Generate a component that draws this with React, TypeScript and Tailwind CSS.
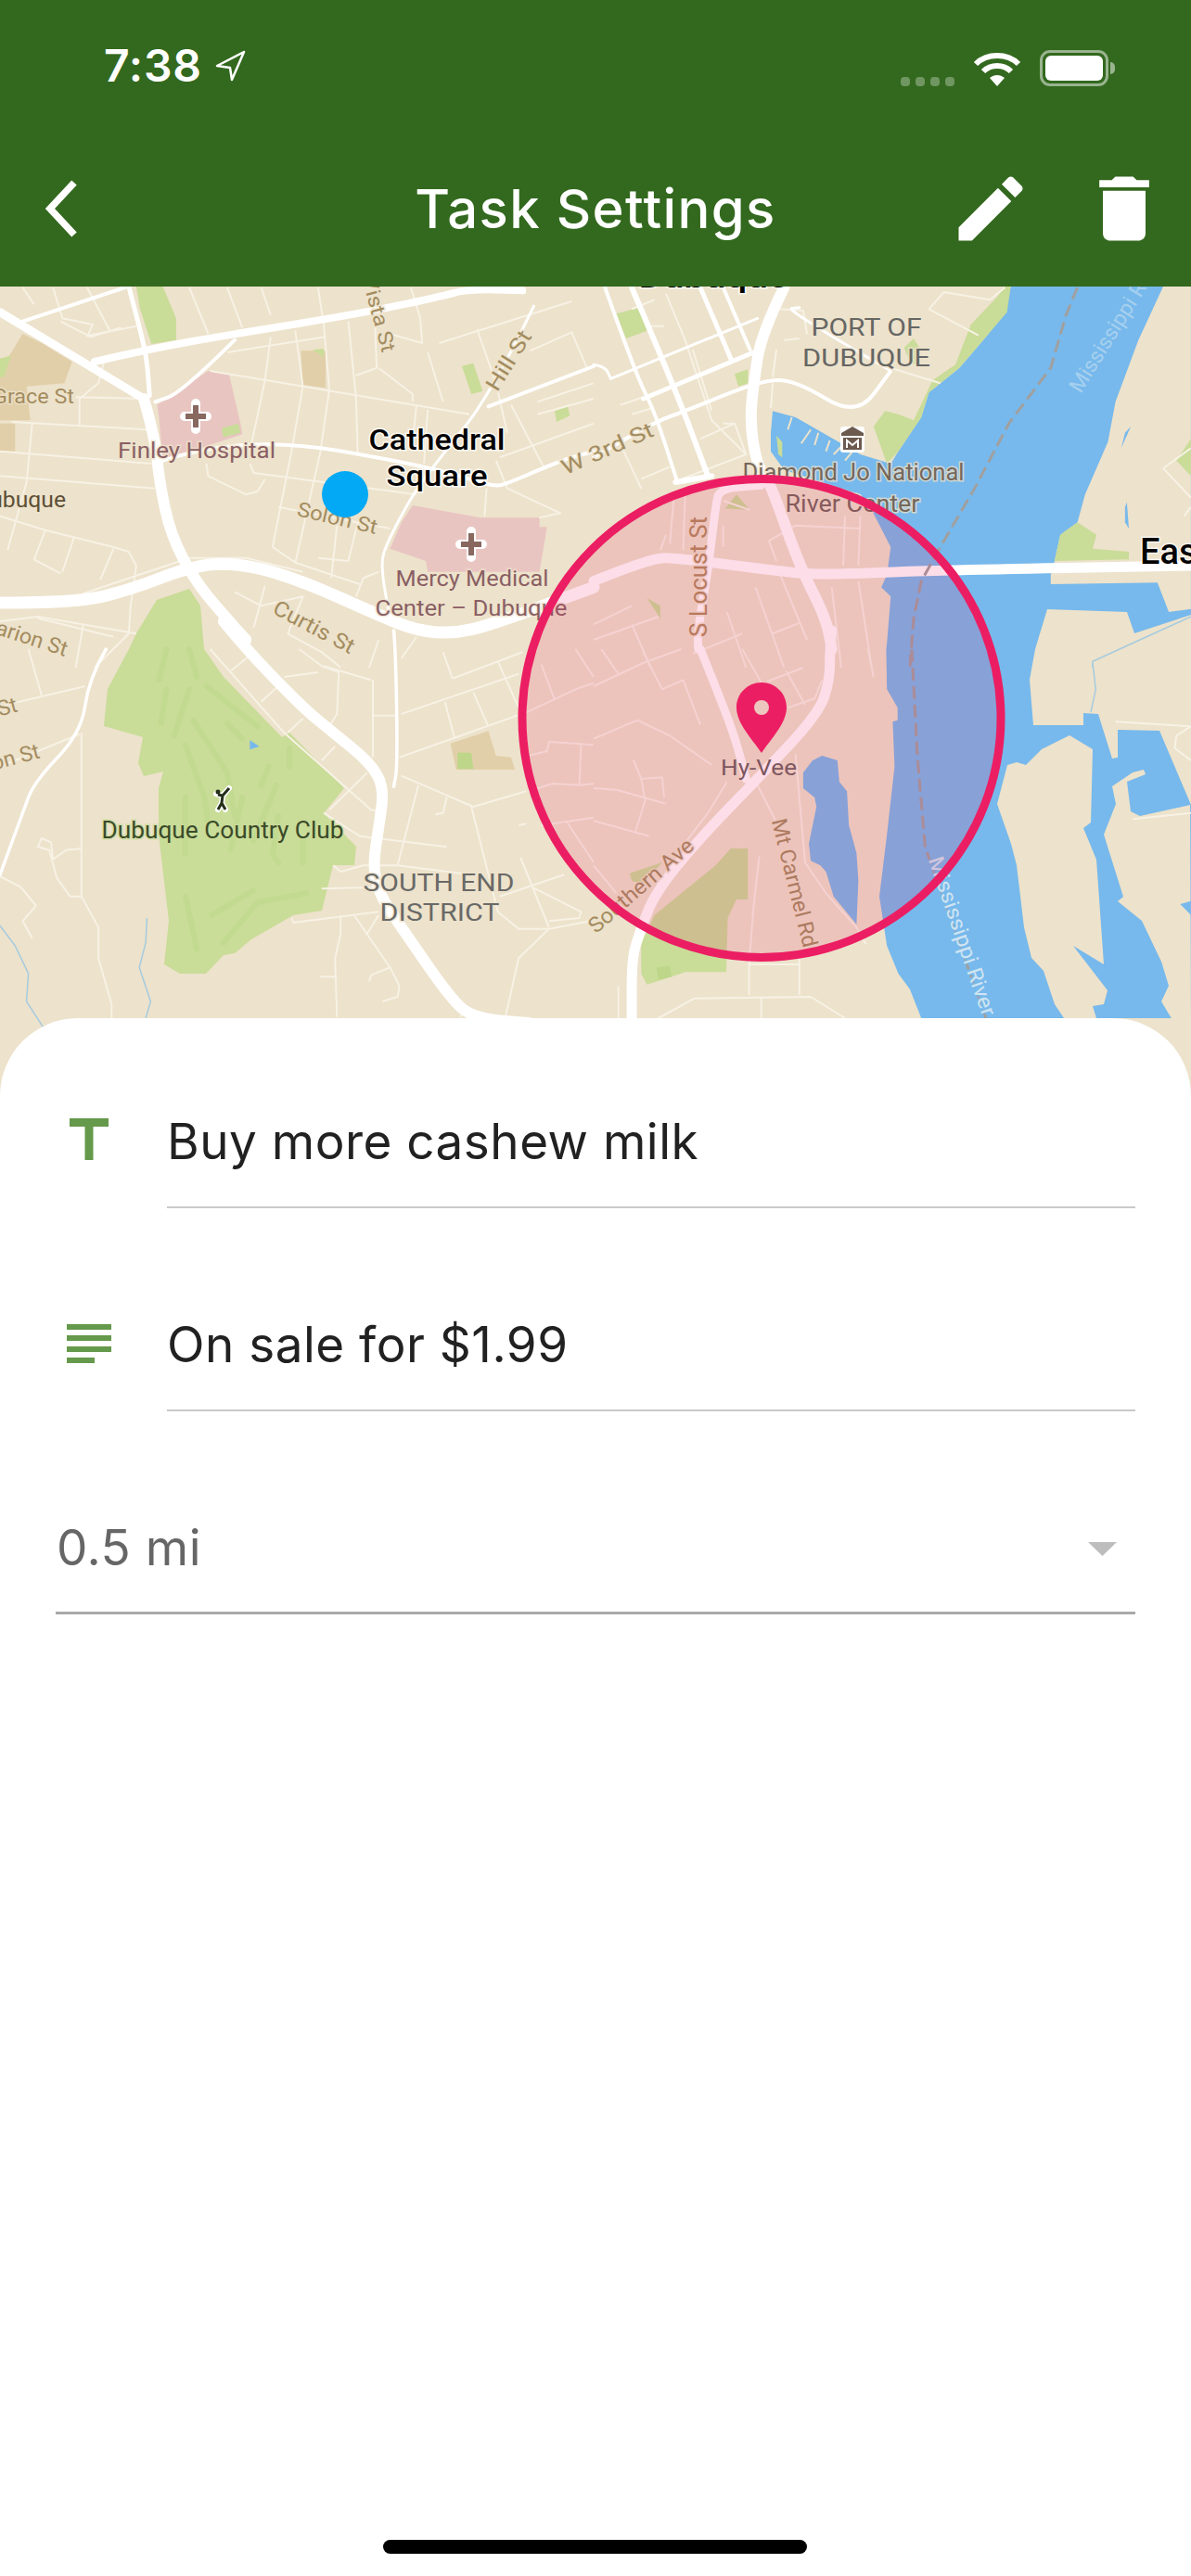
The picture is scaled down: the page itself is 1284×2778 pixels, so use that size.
import React from "react";

type Z = 2 | 3 | 4 | 5;
const toPts = (z: Z, s: string) =>
  s
    .trim()
    .split(/\s+/)
    .map((p) => {
      const [a, b] = p.split(",").map(Number);
      const x = z === 2 || z === 4 ? a / 2.45 : 640 + a / 2.435;
      const y = (z === 2 || z === 3 ? 300 : 700) + b / 3;
      return [x, y];
    });
const conv = (z: Z, s: string) =>
  toPts(z, s)
    .map(([x, y]) => `${x.toFixed(1)},${y.toFixed(1)}`)
    .join(" ");
const smooth = (z: Z, s: string) => {
  const p = toPts(z, s);
  if (p.length < 3) return `M${p[0][0]} ${p[0][1]}L${p[1][0]} ${p[1][1]}`;
  let d = `M${p[0][0].toFixed(1)} ${p[0][1].toFixed(1)}`;
  for (let i = 1; i < p.length - 1; i++) {
    const mx = (p[i][0] + p[i + 1][0]) / 2;
    const my = (p[i][1] + p[i + 1][1]) / 2;
    d += `Q${p[i][0].toFixed(1)} ${p[i][1].toFixed(1)} ${mx.toFixed(1)} ${my.toFixed(1)}`;
  }
  const l = p[p.length - 1];
  return d + `L${l[0].toFixed(1)} ${l[1].toFixed(1)}`;
};

const thin: [Z, string[]][] = [
  [2, [
    "60,30 90,85", "140,30 165,130 245,150 230,190", "230,30 290,170", "500,30 550,180", "600,30 640,160", "690,30 715,120",
    "840,30 855,150", "920,140 940,380 945,570", "990,140 995,290 940,315", "1000,290 1090,375 1090,400", "1030,180 1115,210 1110,130 1085,30",
    "160,140 240,190 320,160", "235,185 360,155", "275,270 260,340 210,390 210,475", "600,240 860,190", "715,190 700,330 660,560",
    "780,170 800,350 770,560 720,870", "855,150 870,360 845,570 780,920", "555,300 1240,440", "1100,410 1090,530", "1130,425 1120,600",
    "200,385 390,390", "30,465 390,490", "0,560 400,600", "0,640 410,680", "85,470 70,660 20,880", "120,815 90,910 160,955", "195,840 165,950",
    "300,875 265,975", "0,770 120,815 300,870 340,885 360,930 345,1060 340,1150 250,1260", "660,600 670,630 1100,700",
    "545,600 550,640 650,700 680,690 700,650", "1285,680 1280,770", "1310,590 1340,680 1480,760 1425,775", "735,740 1030,810",
    "720,870 780,920 950,990", "840,905 920,915 945,790", "890,800 875,970", "1130,240 1170,400", "1260,165 1310,340 1340,500",
    "1160,210 1510,75", "1400,235 1510,175 1550,290", "1350,410 1440,620", "1420,400 1568,340", "1420,440 1568,390", "1320,580 1568,470",
    "620,1015 690,1060 800,1030 760,1150 850,1210 900,1260", "700,995 670,1130", "1000,1170 975,1260", "220,1120 200,1260", "100,1100 300,1160",
    "360,1150 100,1095 0,1110", "940,1030 960,970 1000,950", "1100,1160 1060,1230", "220,1020 500,905 650,905 800,950",
  ]],
  [3, [
    "190,50 240,200 310,460 400,570", "160,70 100,100", "150,155 185,155", "260,230 310,430", "340,470 370,470 400,570 230,650", "280,520 370,470",
    "70,410 130,385", "100,440 155,420", "75,550 125,680", "125,650 200,610", "490,100 550,105 560,180", "480,230 470,320", "500,200 540,195",
    "880,100 920,45 1040,70 1080,30", "880,100 1010,185", "780,290 910,340", "470,340 465,420", "210,720 200,860", "240,700 235,880", "340,720 410,750",
    "340,800 340,870", "460,850 530,800 700,810", "460,850 480,915", "660,770 655,930", "700,770 695,930", "425,1000 500,1260", "490,960 560,1170",
    "695,980 730,1260", "650,1260 625,1000", "0,1120 100,1060", "0,1170 170,1095", "100,1120 150,1260", "350,1080 400,1260", "470,1150 540,1115",
    "260,1215 390,1150", "190,830 175,880", "1495,615 1568,550", "1495,615 1568,710", "1550,770 1568,740",
  ]],
  [4, [
    "75,0 110,150", "0,185 225,120", "0,380 210,275", "215,270 215,800 185,800 150,740 130,650 100,640 110,612 135,625 140,680", "140,680 175,650 215,645",
    "0,735 55,770 95,830 60,880 85,935", "215,800 260,900 260,1000 295,1150 295,1194", "555,0 750,270 980,520 1000,525", "610,70 660,20", "690,170 730,125",
    "760,270 800,225", "850,360 885,315", "870,520 970,400", "790,0 850,55 895,75 890,210 870,250", "750,90 840,75", "855,55 980,100", "985,100 985,350",
    "985,215 1045,215", "1060,210 1370,80", "1055,350 1390,205", "1175,170 1200,285", "1250,140 1290,250", "1195,95 1170,10", "1195,95 1380,10", "1315,40 1370,190",
    "1060,410 1250,510 1390,460", "1105,440 1050,700", "1180,480 1170,530 1150,535", "1245,510 1315,850 1370,905 1450,905 1560,880", "1450,905 1370,1000 1335,1190",
    "1370,570 1390,565", "1375,675 1450,900", "1320,800 1490,730", "1405,770 1535,850 1530,870 1450,880", "855,530 950,605 1180,640",
    "880,700 900,720 960,700 1050,700 1280,735", "850,775 1000,770", "770,870 775,885 1000,850", "900,860 900,920 885,1000 890,1190",
    "935,860 1030,1030 1055,1090 1050,1125 1010,1140", "975,1075 980,1055 1030,1030", "845,1060 885,1060", "970,920 1000,860", "1215,1190 1230,1170",
    "1430,50 1465,165", "1390,205 1530,125 1568,110", "1520,0 1568,90", "1395,345 1445,330 1450,300 1568,310", "1395,460 1460,435 1530,440 1568,435",
    "1530,440 1535,310", "1495,555 1568,690", "1430,570 1568,545",
  ]],
  [5, [
    "0,120 130,45 230,0", "20,0 65,80", "130,10 180,130 235,100 280,245", "390,0 450,130", "0,290 115,230 200,280 310,375", "455,105 550,60", "505,70 555,180",
    "510,190 580,160 600,100", "720,0 735,90", "0,450 60,455 190,500", "105,360 125,420 180,415 185,480", "125,420 135,490 110,590", "0,555 145,605", "0,700 60,790",
    "350,430 300,530 220,660", "430,440 480,560", "530,340 555,690 610,790 690,900 715,955", "435,670 420,830 408,1020 408,1120", "540,990 540,1120", "408,1020 540,1020",
    "170,1194 265,1130 570,1125 660,1194", "440,1125 440,1194", "65,1090 65,1194", "1370,235 1568,250", "1530,280 1525,320 1568,360", "1530,280 1568,250", "1415,550 1568,530",
  ]],
];

const roads: [Z, number, string][] = [
  [2, 9, "0,110 380,390"],
  [2, 12, "380,390 410,520 420,650 450,830 520,990 620,1130 650,1170"],
  [4, 12, "590,-90 650,0 800,190 880,270 980,370 1015,450 1000,580 985,700 1000,790 1060,900 1190,1130 1250,1194 1400,1210"],
  [2, 8, "250,270 390,230 620,180 950,115 1160,60 1240,35 1380,40"],
  [2, 5, "340,27 380,210 390,290 395,380"],
  [2, 4, "60,140 330,30"],
  [2, 4, "620,200 480,370 410,400"],
  [2, 4, "430,590 640,505 1140,610 1300,675 1340,665 1480,590 1568,560"],
  [3, 4, "0,580 150,470 240,430 440,330 530,330 690,450 780,300"],
  [2, 13, "0,1050 200,1050 340,1010 520,925 650,925 800,980 1000,1090 1100,1140 1200,1150 1300,1120 1568,1000"],
  [3, 11, "0,980 150,905 220,905 500,950 600,960 900,945 1568,930"],
  [2, 3, "1410,90 1300,370 1150,600 1090,700 1020,860 1005,930 1030,1100"],
  [4, 3.5, "1040,-60 1045,0 1050,380 1040,445"],
  [2, 4, "1290,415 1568,285"],
  [3, 12, "500,30 440,180 420,340 410,470 430,610 460,650 540,930 610,1100 625,1200"],
  [5, 11, "625,-60 620,0 620,100 590,210 430,420 280,610 160,790 120,920 100,1000 100,1194"],
  [5, 9, "280,0 310,90 370,280 400,420"],
  [3, 9, "275,1200 270,1160 300,950 320,740 330,680 440,670"],
  [3, 4, "30,30 110,310 160,430 220,660"],
  [3, 6, "100,30 215,360 300,640"],
  [3, 5, "280,30 360,260"],
  [3, 4, "340,30 410,230"],
  [3, 3, "45,325 430,130"],
  [3, 5, "130,390 420,240"],
  [3, 3, "0,280 30,285 45,325"],
  [3, 3, "780,300 500,100 540,95"],
  [3, 6, "215,660 310,640"],
  [4, 3.5, "280,0 235,95 215,270 90,430 60,530 0,730"],
];

const fairways: string[] = [
  "440,130 425,240", "500,130 460,280", "510,230 600,400 620,540", "490,310 540,480 550,570", "545,120 680,250", "600,240 640,290", "710,380 690,440",
  "765,320 765,380", "730,440 690,560 670,620", "640,480 610,650", "735,540 720,660 735,690", "800,620 800,690", "490,480 490,660", "490,800 520,970",
  "670,780 560,860", "810,790 680,820 590,950", "440,0 420,100", "500,0 520,90",
];

const P = ({ z, p, c }: { z: Z; p: string; c: string }) => <polygon points={conv(z, p)} fill={c} />;

const LAND = "#ede2cb";
const WATER = "#77b9ec";
const GREEN = "#c9dc98";
const TAN = "#e1cfa9";
const STREET = "#f7f2e5";
const HOSP = "#e9c5c2";
const BROWN = "#a38c5f";

const Label = ({
  t, x, y, s = 22, c = BROWN, w, r = 0, a = "middle", h = LAND, fw = 400,
}: {
  t: string; x: number; y: number; s?: number; c?: string; w?: number; r?: number; a?: "start" | "middle" | "end"; h?: string; fw?: number;
}) => (
  <text
    x={x}
    y={y}
    fontSize={s}
    fill={c}
    fontWeight={fw}
    textAnchor={a}
    textLength={w}
    lengthAdjust={w ? "spacingAndGlyphs" : undefined}
    transform={r ? `rotate(${r} ${x} ${y})` : undefined}
    stroke={h}
    strokeWidth={3}
    strokeOpacity={0.75}
    paintOrder="stroke"
  >
    {t}
  </text>
);

const Cross = ({ x, y }: { x: number; y: number }) => (
  <g>
    <path d={`M${x - 12} ${y}H${x + 12}M${x} ${y - 14}V${y + 14}`} stroke="#fff" strokeWidth={10} strokeLinecap="round" />
    <path d={`M${x - 11} ${y}H${x + 11}M${x} ${y - 12}V${y + 12}`} stroke="#88685f" strokeWidth={6} />
  </g>
);

function MapView() {
  return (
    <svg viewBox="0 309 1284 873" width={1284} height={873} className="block shrink-0 font-['Roboto',sans-serif]">
      <rect x={0} y={309} width={1284} height={873} fill={LAND} />
      {/* river */}
      <P z={3} c={WATER} p="1095,27 1080,110 1030,190 960,290 880,370 860,450 800,560 780,600 700,570 530,450 470,430 465,500 465,560 500,620 700,700 730,750 780,870 770,960 755,1000 780,1030 770,1180 768,1200 770,1330 798,1390 798,1430 785,1435 790,1580 770,1800 750,2000 760,2080 770,2160 800,2250 830,2300 860,2394 1568,2394 1568,27" />
      <P z={3} c={LAND} p="1495,27 1430,200 1370,400 1350,530 1290,700 1270,790 1225,830 1210,915 1200,960 1200,990 1480,985 1510,1080 1568,1070 1568,27" />
      <polygon fill={LAND} points="1129,657 1215,660 1223,683 1284,663 1284,868 1250,788 1205,787 1205,817 1199,818 1184,770 1168,769 1168,782 1114,782 1110,733 1116,700" />
      <polygon fill={LAND} points="1199,848 1221,833 1233,830 1235,835 1215,843 1219,875 1229,880 1283,868 1284,1100 1264,1100 1252,1080 1260,1063 1252,1037 1231,993 1205,972 1211,967 1190,900 1203,867" />
      <polygon fill={LAND} points="1075,867 1086,825 1096,822 1106,825 1123,808 1153,793 1178,808 1176,887 1168,893 1182,927 1190,1040 1157,1020 1194,1068 1190,1083 1178,1085 1182,1098 1147,1098 1137,1083 1125,1047 1112,1033 1104,1000 1096,933 1090,910" />
      <P z={5} c={WATER} p="1540,825 1568,815 1568,860" />
      <P z={5} c={WATER} p="600,345 640,360 645,430 665,460 670,570 690,660 695,750 690,890 630,800 610,720 595,700 570,685 565,630 585,510 580,480 550,450 550,400 575,360" />
      <P z={3} c={WATER} p="1410,480 1385,550 1395,500" />
      <P z={3} c={WATER} p="1400,725 1405,810 1395,790 1395,740" />

      {/* parks */}
      <P z={3} c={GREEN} p="1225,830 1270,790 1320,830 1310,875 1405,885 1405,910 1210,915" />
      <P z={3} c={GREEN} p="1568,520 1530,590 1568,640" />
      <P z={3} c={GREEN} p="1095,27 1085,110 1030,190 960,290 880,370 860,450 800,560 770,600 735,480 765,430 800,440 840,460 890,330 950,280 990,150 1060,60 1080,27" />
      <P z={3} c={GREEN} p="815,225 840,195 855,225 855,285 830,270" />
      <P z={3} c={GREEN} p="60,115 120,95 140,170 85,195" />
      <P z={3} c={GREEN} p="370,310 405,295 405,340 380,350" />
      <P z={3} c={GREEN} p="345,745 375,700 410,750" />
      <P z={3} c={GREEN} p="140,1035 175,1060 175,1100" />
      <P z={2} c={GREEN} p="360,27 430,27 465,130 465,200 400,213 370,100" />
      <P z={2} c={TAN} p="0,300 60,180 110,210 190,270 170,340 70,350 80,460 0,460" />
      <P z={2} c={TAN} p="0,470 40,470 40,560 0,560" />
      <P z={2} c={TAN} p="795,235 860,235 860,355 800,345" />
      <P z={4} c={TAN} p="1190,305 1290,265 1310,345 1350,350 1360,390 1205,390" />
      <P z={4} c="#bdd689" p="1208,335 1245,335 1250,388 1208,388" />
      <P z={2} c={GREEN} p="1220,285 1250,275 1275,365 1245,375" />
      <P z={2} c={GREEN} p="1465,430 1500,415 1505,445 1470,465" />
      <P z={2} c={GREEN} p="825,232 855,228 855,255" />
      <P z={2} c={GREEN} p="0,260 30,250 10,320 0,320" />
      <P z={2} c={HOSP} p="415,410 550,300 605,310 635,470 640,505 430,590 420,450" />
      <P z={2} c={GREEN} p="585,485 630,470 635,500 590,515" />
      <P z={2} c={HOSP} p="1090,735 1270,775 1425,775 1425,805 1445,805 1425,950 1130,950 1125,915 1030,875 1060,790" />
      <P z={5} c={GREEN} p="360,645 405,645 405,810 375,810 352,870 348,1045 240,1045 205,1060 140,1085 125,1050 125,950 160,860 320,700" />
      <P z={5} c="#bdd689" p="165,1030 200,1025 205,1060 170,1070" />
      <P z={5} c={GREEN} p="95,725 180,690 130,760 100,750" />
      {/* golf */}
      <polygon
        fill={GREEN}
        points="169,647 204,635 216,653 220,700 241,730 304,795 312,790 371,850 349,877 384,913 382,933 359,933 347,982 316,987 271,1013 253,1028 241,1030 222,1050 194,1050 177,1040 182,993 171,900 171,850 176,832 155,837 149,823 154,795 112,783 116,743 139,700 147,683"
      />
      {fairways.map((f, i) => (
        <polyline key={i} points={conv(4, f)} fill="none" stroke="#c2da90" strokeWidth={6} strokeLinecap="round" />
      ))}
      <P z={4} c={WATER} p="660,295 685,315 660,325" />

      {/* streams */}
      <polyline points={conv(4, "0,895 40,960 75,1050 70,1140 115,1225")} fill="none" stroke="#a5cbe0" strokeWidth={1.5} />
      <polyline points={conv(4, "388,870 385,950 368,1030 398,1140 385,1194")} fill="none" stroke="#a5cbe0" strokeWidth={1.5} />
      <polyline points={conv(5, "1310,45 1318,130 1305,205")} fill="none" stroke="#a5cbe0" strokeWidth={1.5} />
      <polyline points={conv(3, "1310,1260 1310,1240 1568,1095")} fill="none" stroke="#a5cbe0" strokeWidth={1.5} />

      {/* marina docks */}
      {["520,450 510,490", "570,490 545,535", "590,500 580,540", "620,525 610,560", "650,545 630,570", "680,560 660,590"].map((d, i) => (
        <polyline key={i} points={conv(3, d)} fill="none" stroke={LAND} strokeWidth={2} />
      ))}
      <P z={3} c={GREEN} p="480,510 495,530 495,580 485,570" />

      {/* streets */}
      {thin.map(([z, list]) =>
        list.map((s, i) => (
          <polyline key={`${z}-${i}`} points={conv(z, s)} fill="none" stroke={STREET} strokeWidth={2} strokeLinejoin="round" />
        )),
      )}
      {roads.map(([z, w, s], i) => (
        <path key={i} d={smooth(z, s)} fill="none" stroke="#ffffff" strokeWidth={w} strokeLinejoin="round" strokeLinecap="round" />
      ))}

      {/* state line */}
      <polyline points={conv(3, "1270,30 1240,120 1200,290 1090,470 1000,680 910,870 860,980 840,1100 830,1260")} fill="none" stroke="#a0a0a0" strokeWidth={3} strokeDasharray="14 6" />
      <polyline points={conv(5, "835,0 850,350 870,640 1030,1194")} fill="none" stroke="#a0a0a0" strokeWidth={3} strokeDasharray="14 6" />

      {/* labels */}
      <Label t="Dubuque" x={769} y={310} s={30} c="#000" w={161} fw={500} h="#fff" />
      <Label t="Grace St" x={80} y={435} a="end" w={88} />
      <Label t="Dubuque" x={71} y={547} s={24} a="end" w={98} c="#5c4f36" />
      <Label t="Finley Hospital" x={212} y={494} s={24} w={170} c="#8a5f64" />
      <Label t="Cathedral" x={471} y={485} s={31} w={147} c="#000" fw={500} h="#fff" />
      <Label t="Square" x={471} y={524} s={31} w={109} c="#000" fw={500} h="#fff" />
      <Label t="Solon St" x={362} y={566} s={22} w={88} r={13} />
      <Label t="Vista St" x={412} y={381} s={22} a="end" r={75} w={84} />
      <Label t="Hill St" x={555} y={393} s={23} r={-58} w={72} />
      <Label t="W 3rd St" x={658} y={491} s={23} r={-24} w={106} />
      <Label t="Curtis St" x={335} y={683} s={23} r={28} w={96} />
      <Label t="Marion St" x={70} y={708} s={23} a="end" r={18} w={100} />
      <Label t="St" x={20} y={767} s={23} a="end" r={-15} />
      <Label t="on St" x={44} y={817} s={23} a="end" r={-15} />
      <Label t="Mercy Medical" x={509} y={632} s={24} w={165} c="#8a5f64" />
      <Label t="Center – Dubuque" x={508} y={664} s={24} w={207} c="#8a5f64" />
      <Label t="PORT OF" x={934} y={362} s={25} w={119} c="#666664" />
      <Label t="DUBUQUE" x={934} y={395} s={25} w={138} c="#666664" />
      <Label t="Diamond Jo National" x={920} y={518} s={25} w={239} c="#75675c" />
      <Label t="River Center" x={919} y={552} s={25} w={145} c="#75675c" />
      <Label t="Eas" x={1229} y={608} s={38} a="start" c="#000" fw={500} h="#fff" />
      <Label t="Mississippi River" x={1165} y={425} s={23} a="start" r={-58} c="#a6d0ef" h={WATER} />
      <Label t="Mississippi River" x={1030} y={1012} s={23} r={71} w={180} c="#cfe4f2" h={WATER} />
      <Label t="S Locust St" x={762} y={622} s={25} r={-90} w={130} c="#b08a5c" />
      <Label t="Mt Carmel Rd" x={849} y={954} s={23} r={76} w={142} c="#a38c5f" />
      <Label t="Southern Ave" x={696} y={961} s={23} r={-41} w={142} />
      <Label t="Dubuque Country Club" x={240} y={904} s={26} w={261} c="#3a4a28" h={GREEN} />
      <Label t="SOUTH END" x={473} y={961} s={26} w={163} c="#696967" />
      <Label t="DISTRICT" x={474} y={993} s={26} w={129} c="#696967" />

      <Cross x={211} y={449} />
      <Cross x={508} y={587} />

      {/* golfer */}
      <path d="M247 850L240 858L239 866L235 873M239 866L243 873M240 858L233 856" fill="none" stroke="#fff" strokeWidth={6} strokeLinecap="round" strokeLinejoin="round" />
      <path d="M247 850L240 858L239 866L235 873M239 866L243 873M240 858L235 857" fill="none" stroke="#24301a" strokeWidth={3} strokeLinejoin="round" />
      <circle cx={235} cy={854} r={2.5} fill="#24301a" />

      {/* museum */}
      <g>
        <rect x={906} y={460} width={26} height={28} fill="#fff" rx={3} />
        <path d="M919 460L931 467V470H907V467Z" fill="#6b5a4e" />
        <rect x={909} y={472} width={20} height={13} fill="#6b5a4e" />
        <path d="M913 483V475L919 480L925 475V483" fill="none" stroke="#fff" strokeWidth={2} />
      </g>

      {/* geofence */}
      <circle cx={821} cy={774.5} r={258} fill="#e91e63" fillOpacity={0.15} stroke="#ec1e63" strokeWidth={9} />

      {/* pin */}
      <path d="M821 736C806 736 794 748 794 763C794 780 811 797 821 812C831 797 848 780 848 763C848 748 836 736 821 736Z" fill="#ec1e63" />
      <circle cx={821} cy={763} r={8} fill="#edc6be" />
      <text x={818} y={836} fontSize={24} fill="#7d5660" textAnchor="middle" textLength={82} lengthAdjust="spacingAndGlyphs">
        Hy-Vee
      </text>

      {/* you */}
      <circle cx={372} cy={533} r={25} fill="#03a9f4" />
    </svg>
  );
}

const Row = ({ icon, text }: { icon: React.ReactNode; text: string }) => (
  <div className="flex pl-[60px] pr-[60px] mb-[99px]">
    <div className="w-[72px] h-[72px] mt-[11px] shrink-0">{icon}</div>
    <div className="ml-[48px] flex-1 h-[120px] border-b-2 border-[#c9c9c9] pt-[18px] text-[53px] leading-[60px] tracking-[0.5px] text-[#212121]">
      {text}
    </div>
  </div>
);

export default function App() {
  return (
    <div className="relative w-[1284px] h-[2778px] flex flex-col overflow-hidden bg-white font-['Inter',sans-serif]">
      <header className="bg-[#33691e] h-[309px] shrink-0 z-10 text-white">
        <div className="h-[141px] relative flex items-end justify-between pb-[49px] pl-[112px] pr-[82px]">
          <div className="flex items-center gap-[14px]">
            <span className="text-[48px] leading-[42px] font-semibold tracking-[0.8px]">7:38</span>
            <svg width="34" height="34" viewBox="0 0 34 34" className="shrink-0">
              <path d="M31 2L2 17L16 19L18 32Z" fill="none" stroke="#fff" strokeWidth="2.5" strokeLinejoin="round" />
            </svg>
          </div>
          <div className="flex items-end gap-[20px] mb-[-1px]">
            <div className="flex gap-[6px]">
              <span className="w-[10px] h-[10px] rounded-[4px] bg-white/30" />
              <span className="w-[10px] h-[10px] rounded-[4px] bg-white/30" />
              <span className="w-[10px] h-[10px] rounded-[4px] bg-white/30" />
              <span className="w-[10px] h-[10px] rounded-[4px] bg-white/30" />
            </div>
            <svg width="52" height="37" viewBox="0 0 52 37">
              <path d="M3 13C15 1 37 1 49 13" fill="none" stroke="#fff" strokeWidth="6" />
              <path d="M11 21C19 13 33 13 41 21" fill="none" stroke="#fff" strokeWidth="6" />
              <path d="M18 28C23 24 29 24 34 28L26 37Z" fill="#fff" />
            </svg>
            <div className="flex items-center">
              <div className="w-[74px] h-[39px] rounded-[11px] border-[3px] border-white/50 p-[3px]">
                <div className="w-full h-full rounded-[6px] bg-white" />
              </div>
              <div className="w-[5px] h-[13px] ml-[2px] rounded-r-full bg-white/50" />
            </div>
          </div>
        </div>
        <div className="h-[168px] grid grid-cols-[1fr_auto_1fr] items-center">
          <div className="pl-[49px]">
            <svg width="34" height="62" viewBox="0 0 34 62" className="block">
              <path d="M31 3L5 31L31 59" fill="none" stroke="#fff" strokeWidth="7.5" />
            </svg>
          </div>
          <div className="text-[58px] leading-[70px] font-medium tracking-[1.35px] text-center">Task Settings</div>
          <div className="flex justify-end pr-[26px] gap-[52px]">
            <svg width="92" height="92" viewBox="0 0 24 24" fill="#fff">
              <path d="M3 17.25V21h3.75L17.81 9.94l-3.75-3.75L3 17.25zM20.71 7.04c.39-.39.39-1.02 0-1.41l-2.34-2.34c-.39-.39-1.02-.39-1.41 0l-1.83 1.83 3.75 3.75 1.83-1.83z" />
            </svg>
            <svg width="92" height="92" viewBox="0 0 24 24" fill="#fff">
              <path d="M6 19c0 1.1.9 2 2 2h8c1.1 0 2-.9 2-2V7H6v12zM19 4h-3.5l-1-1h-5l-1 1H5v2h14V4z" />
            </svg>
          </div>
        </div>
      </header>

      <MapView />

      <main className="relative -mt-[84px] flex-1 bg-white rounded-t-[84px] pt-[85px]">
        <Row
          text="Buy more cashew milk"
          icon={
            <svg width="72" height="72" viewBox="0 0 24 24" fill="#65994b">
              <path d="M5 4v3h5.5v12h3V7H19V4z" />
            </svg>
          }
        />
        <Row
          text="On sale for $1.99"
          icon={
            <svg width="72" height="72" viewBox="0 0 24 24" fill="#65994b">
              <path d="M14 17H4v2h10v-2zm6-8H4v2h16V9zM4 15h16v-2H4v2zM4 5v2h16V5H4z" />
            </svg>
          }
        />
        <div className="mx-[60px] h-[120px] border-b-[3px] border-[#a9a9a9] pt-[18px] pl-[1px] flex justify-between text-[53px] leading-[60px] tracking-[0.5px] text-[#666666]">
          <span>0.5 mi</span>
          <svg width="31" height="15" viewBox="0 0 31 15" className="mt-[24px] mr-[20px]">
            <path d="M0 0H31L15.5 15Z" fill="#bdbdbd" />
          </svg>
        </div>
      </main>

      <div className="absolute left-[413px] top-[2739px] w-[457px] h-[15px] rounded-[8px] bg-black" />
    </div>
  );
}
